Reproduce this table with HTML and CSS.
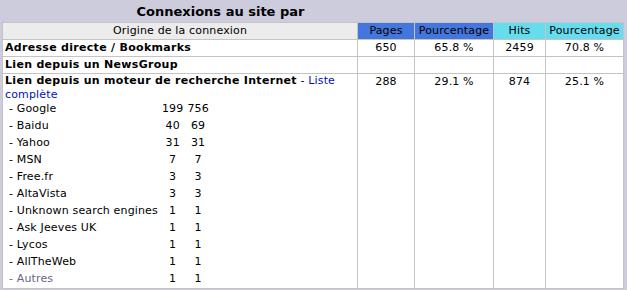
FILE: index.html
```html
<!DOCTYPE html>
<html lang="fr">
<head>
<meta charset="utf-8">
<link rel="stylesheet" href="styles.css">
<title>Connexions au site par</title>
</head>
<body>
<div class="box">
  <div class="title-row">
    <div class="title">Connexions au site par</div>
  </div>
  <div class="data-wrap">
    <table class="data">
      <colgroup>
        <col class="c-origin"><col class="c-pages"><col class="c-pct"><col class="c-hits"><col class="c-pct2">
      </colgroup>
      <tr class="head">
        <th class="h-origin">Origine de la connexion</th>
        <th class="h-pages">Pages</th>
        <th class="h-pages">Pourcentage</th>
        <th class="h-hits">Hits</th>
        <th class="h-hits">Pourcentage</th>
      </tr>
      <tr>
        <td class="label"><b>Adresse directe / Bookmarks</b></td>
        <td>650</td><td>65.8 %</td><td>2459</td><td>70.8 %</td>
      </tr>
      <tr>
        <td class="label"><b>Lien depuis un NewsGroup</b></td>
        <td>&nbsp;</td><td>&nbsp;</td><td>&nbsp;</td><td>&nbsp;</td>
      </tr>
      <tr class="search">
        <td class="label"><b>Lien depuis un moteur de recherche Internet</b> - <a href="#">Liste complète</a>
          <table class="engines">
            <tr><td>- Google</td><td>199</td><td>756</td></tr>
            <tr><td>- Baidu</td><td>40</td><td>69</td></tr>
            <tr><td>- Yahoo</td><td>31</td><td>31</td></tr>
            <tr><td>- MSN</td><td>7</td><td>7</td></tr>
            <tr><td>- Free.fr</td><td>3</td><td>3</td></tr>
            <tr><td>- AltaVista</td><td>3</td><td>3</td></tr>
            <tr><td>- Unknown search engines</td><td>1</td><td>1</td></tr>
            <tr><td>- Ask Jeeves UK</td><td>1</td><td>1</td></tr>
            <tr><td>- Lycos</td><td>1</td><td>1</td></tr>
            <tr><td>- AllTheWeb</td><td>1</td><td>1</td></tr>
            <tr class="other"><td>- Autres</td><td>1</td><td>1</td></tr>
          </table>
        </td>
        <td>288</td><td>29.1 %</td><td>874</td><td>25.1 %</td>
      </tr>
    </table>
  </div>
</div>
</body>
</html>
```

FILE: styles.css
```css
html, body {
  margin: 0;
  padding: 0;
  background: #ffffff;
}
body {
  font-family: "DejaVu Sans", Verdana, sans-serif;
  font-size: 11px;
  color: #000000;
  letter-spacing: 0.15px;
}
b {
  letter-spacing: 0.3px;
}
.box {
  width: 627px;
  background: #ccccdd;
  padding: 0 4px 1px 2px;
  box-sizing: border-box;
}
.title-row {
  height: 22px;
  display: flex;
  align-items: center;
  padding-top: 1px;
  box-sizing: border-box;
}
.title {
  width: 437px;
  text-align: center;
  font-weight: bold;
  font-size: 13px;
  color: #000000;
  letter-spacing: 0;
}
.data-wrap {
  background: #ffffff;
}
.data {
  width: 621px;
  border-collapse: collapse;
  table-layout: fixed;
}
.c-origin { width: 355px; }
.c-pages { width: 57px; }
.c-pct { width: 79px; }
.c-hits { width: 52px; }
.c-pct2 { width: 78px; }
.data th, .data td {
  border: 1px solid #c4c4c4;
  padding: 0 2px;
  height: 16px;
  font-weight: normal;
  text-align: center;
  vertical-align: top;
  line-height: 16px;
  white-space: nowrap;
}
.h-origin { background: #ececec; }
.h-pages { background: #4477dd; }
.h-hits { background: #66ddee; }
.data td.label {
  text-align: left;
  white-space: normal;
}
.search td.label {
  line-height: 14px;
  padding-top: 0;
  padding-bottom: 1px;
}
.search > td {
  line-height: 16px;
}
a {
  color: #0011bb;
  text-decoration: none;
}
.engines {
  border-collapse: collapse;
  margin: -2px 0 0 2px;
}
.engines td {
  border: 0;
  padding: 0 2px;
  height: 17px;
  line-height: 17px;
  text-align: center;
  white-space: nowrap;
}
.engines td:first-child {
  text-align: left;
  width: 148px;
}
.engines td:nth-child(2),
.engines td:nth-child(3) {
  width: 20px;
}
.other td:first-child {
  color: #666688;
}
```
